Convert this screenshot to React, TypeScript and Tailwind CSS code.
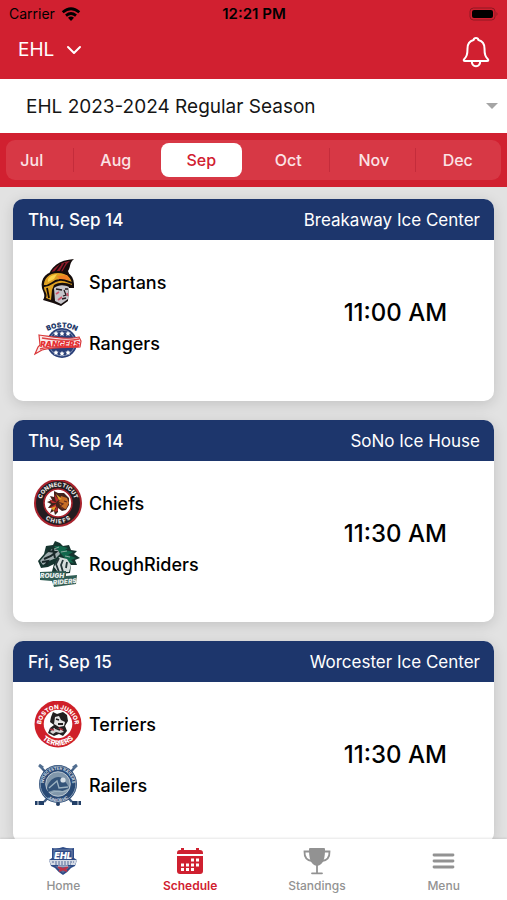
import type { ReactNode } from "react";

function SpartansLogo() {
  return (
    <svg viewBox="0 0 48 48" className="size-12" aria-hidden="true">
      <path d="M14 19C16 8 25 1 40 0C35 4 37 8 34 12L36 17L14 21Z" fill="#160d0c" />
      <path d="M17 14C21 7 28 3 36 2C31 6 31 9 28 13Z" fill="#8f1b2a" />
      <path d="M21 13L27 5M26 13L31 4M30 12L34 6" stroke="#160d0c" strokeWidth="1.5" />
      <path d="M8 29C6 19 13 12 24 12C35 12 41 17 40 29L35 29L34 42L27 47L19 44L9 41C12 36 9 33 8 29Z" fill="#160d0c" />
      <path d="M10 28C9 20 15 14 24 14C33 14 38 19 38 26C31 23 25 23 20 26L18 31L17 41L12 39C14 34 10 33 10 28Z" fill="#dfa122" />
      <path d="M23 17L33 16L36 21L26 21Z" fill="#f08125" />
      <path d="M14 20C16 17 19 16 23 15L20 20L14 23Z" fill="#fbd34b" />
      <path d="M10 27C17 27 18 22 25 21C31 20 34 23 38 24M13 29L15 39" fill="none" stroke="#160d0c" strokeWidth="1.8" />
      <path d="M20 29C25 25 31 26 35 28L34 40L27 45L21 42Z" fill="#c6c5ca" />
      <path d="M22 30L28 31M31 30L34 30M30 31L32 36L29 37M28 40L32 39" fill="none" stroke="#241b20" strokeWidth="1.3" />
      <path d="M25 33L22 35M28 38L24 41M33 34L34 37" stroke="#d0566c" strokeWidth="1.6" />
    </svg>
  );
}

function RangersLogo() {
  return (
    <svg viewBox="0 0 48 48" className="size-12" aria-hidden="true">
      <circle cx="28" cy="23" r="15" fill="#293f78" />
      <circle cx="28" cy="23" r="13" fill="none" stroke="#8c9cbd" strokeWidth=".8" />
      <path id="rangers-top" d="M12 12Q28 3 44 12" fill="none" />
      <text fill="#243969" stroke="#fff" strokeWidth="1" paintOrder="stroke" fontFamily="Inter, sans-serif" fontSize="7" fontWeight="900">
        <textPath href="#rangers-top" startOffset="50%" textAnchor="middle">BOSTON</textPath>
      </text>
      <g fill="#fff">
        <path id="rangers-star" d="M22 11l.8 1.6 1.8.2-1.3 1.3.3 1.8-1.6-.9-1.6.9.3-1.8-1.3-1.3 1.8-.2Z" />
        <use href="#rangers-star" x="6" />
        <use href="#rangers-star" x="12" />
        <use href="#rangers-star" y="19" />
        <use href="#rangers-star" x="6" y="20" />
        <use href="#rangers-star" x="12" y="19" />
      </g>
      <path d="M5 15C20 17 33 20 45 17L47 21L46 27C34 28 21 26 8 30L1 34L4 27L6 25Z" fill="#fbeaea" stroke="#d9393b" strokeWidth="1.2" />
      <path d="M8 18C20 20 34 22 45 19M6 29C16 25 33 27 45 26" stroke="#dd4546" strokeWidth="1.4" fill="none" />
      <text x="26" y="27" textAnchor="middle" fill="#e52f32" fontFamily="Inter, sans-serif" fontSize="8" fontWeight="900" fontStyle="italic">RANGERS</text>
    </svg>
  );
}

function ChiefsLogo() {
  return (
    <svg viewBox="0 0 48 48" className="size-12" aria-hidden="true">
      <circle cx="24" cy="23" r="24" fill="#a8232d" />
      <circle cx="24" cy="23" r="22" fill="#231c20" />
      <circle cx="24" cy="23" r="14" fill="#fff" stroke="#a8232d" strokeWidth="1.6" />
      <path id="chiefs-top" d="M7.6 28A17 17 0 1 1 40.4 28" fill="none" />
      <path id="chiefs-bottom" d="M4 27A20.4 20.4 0 0 0 44 27" fill="none" />
      <g fill="#e9e5e3" fontFamily="Inter, sans-serif" fontSize="5.8" fontWeight="800">
        <text><textPath href="#chiefs-top" startOffset="50%" textAnchor="middle">CONNECTICUT</textPath></text>
        <text><textPath href="#chiefs-bottom" startOffset="50%" textAnchor="middle">C H I E F S</textPath></text>
      </g>
      <path d="M20 11L24 13L30 13L35 18L35 25L32 30L28 31L24 28L24 32L21 35L20 31L16 33L18 28L14 28L17 24L13 22L18 20L16 16L20 17Z" fill="#42231c" />
      <path d="M27 16L33 18L35 23L32 29L27 28L25 22Z" fill="#c66f25" />
      <path d="M20 14L25 20L22 22ZM15 19L23 23L18 23ZM15 28L22 24L22 28ZM20 32L23 26L24 31Z" fill="#b92c2b" />
      <path d="M22 14L28 19L25 20ZM17 28L22 26L20 31Z" fill="#e5a32b" />
      <path d="M24 22L29 24L26 26L30 29M30 21L33 22" fill="none" stroke="#602c1c" strokeWidth="1.2" />
    </svg>
  );
}

function RoughRidersLogo() {
  return (
    <svg viewBox="0 0 48 48" className="size-12" aria-hidden="true">
      <path d="M12 5L19 4L21 0L26 2L29 5L35 4L37 9L43 10L40 13L46 17L41 19L43 24L37 24L36 32L17 34L20 23L14 26L7 27L4 20L10 13Z" fill="#16352f" />
      <path d="M20 5L27 5L34 7L31 9L39 11L34 14L42 17L37 19L40 22L34 21L29 15Z" fill="#12674c" />
      <path d="M12 13L18 8L24 9L26 13L22 17L15 20L9 24L6 20Z" fill="#9eabad" />
      <path d="M14 10L22 11L17 15L10 18M8 21L14 20L12 24M19 8L21 17" fill="none" stroke="#192728" strokeWidth="2" />
      <path d="M25 16L33 18L37 24L35 31L24 31L20 26Z" fill="#d6dddc" />
      <path d="M25 17L22 23L25 31M29 19L27 24L29 31M33 21L32 27" fill="none" stroke="#243638" strokeWidth="1.8" />
      <path d="M20 8L25 6M27 11L33 10M31 15L36 16" stroke="#8aaca0" />
      <path d="M6 31L32 30L32 35L43 34L42 43L20 46L18 40L6 39Z" fill="#315d54" />
      <g fill="#e7ecea" fontFamily="Inter, sans-serif" fontWeight="900" fontSize="6.6" fontStyle="italic">
        <text x="6" y="37">ROUGH</text>
        <text x="19" y="44" transform="rotate(-5 19 44)">RIDERS</text>
      </g>
    </svg>
  );
}

function TerriersLogo() {
  return (
    <svg viewBox="0 0 48 48" className="size-12" aria-hidden="true">
      <circle cx="24" cy="23" r="23.5" fill="#cf2029" />
      <circle cx="24" cy="23" r="14.3" fill="#fff" />
      <path id="terriers-top" d="M7.5 28A16.8 16.8 0 1 1 40.5 28" fill="none" />
      <path id="terriers-bottom" d="M3 28A21.6 21.6 0 0 0 45 28" fill="none" />
      <g fill="#fff" fontFamily="Inter, sans-serif" fontWeight="800">
        <text fontSize="6"><textPath href="#terriers-top" startOffset="50%" textAnchor="middle">BOSTON JUNIOR</textPath></text>
        <text fontSize="7.2"><textPath href="#terriers-bottom" startOffset="50%" textAnchor="middle">TERRIERS</textPath></text>
      </g>
      <path d="M17 16L19 11L23 13L29 11L33 14L34 20L31 25L33 30L29 35L25 33L20 35L14 32L16 27L20 24L16 21Z" fill="#221f20" />
      <path d="M21 16L25 15L27 19L31 21L30 25L25 26L20 23Z" fill="#e5e4e4" />
      <path d="M20 27L27 28L30 31L26 32L22 31L19 33L16 31Z" fill="#d5d4d4" />
      <path d="M22 18L25 19M28 17L31 19M24 23L29 23M21 27L26 29" stroke="#221f20" strokeWidth="1.8" />
      <path d="M16 28L20 29M25 27L29 29" stroke="#a22c3b" strokeWidth="1.4" />
    </svg>
  );
}

function RailersLogo() {
  return (
    <svg viewBox="0 0 48 48" className="size-12" aria-hidden="true">
      <path d="M6 4L38 40M42 4L10 40" fill="none" stroke="#405d83" strokeWidth="2.4" />
      <path d="M5 3L9 6M43 3L39 6" stroke="#526f91" strokeWidth="3" />
      <path d="M1 41H10M38 41H47" stroke="#223f67" strokeWidth="4" />
      <path d="M4 39V43M44 39V43" stroke="#dbe2e8" />
      <circle cx="24" cy="22" r="19" fill="#294a75" />
      <circle cx="24" cy="22" r="17.8" fill="none" stroke="#9dafc2" strokeWidth=".8" />
      <circle cx="24" cy="22" r="12.3" fill="#8197ab" stroke="#d1d9df" strokeWidth=".8" />
      <path id="railers-top" d="M10 25A14.3 14.3 0 1 1 38 25" fill="none" />
      <path id="railers-bottom" d="M7 25A17.2 17.2 0 0 0 41 25" fill="none" />
      <g fill="#d7dfe5" fontFamily="Inter, sans-serif" fontWeight="700" fontSize="4">
        <text><textPath href="#railers-top" startOffset="50%" textAnchor="middle">WORCESTER RAILERS</textPath></text>
        <text><textPath href="#railers-bottom" startOffset="50%" textAnchor="middle">JUNIOR HC</textPath></text>
      </g>
      <path d="M13 26C15 17 23 13 28 16L33 22L35 26L29 29L20 28L14 30Z" fill="#345479" />
      <circle cx="29" cy="18" r="2.6" fill="#d7e0e7" />
      <path d="M15 26L23 19L25 26L34 25M17 31C23 27 29 32 34 28" fill="none" stroke="#9cb2c1" strokeWidth="1.3" />
      <circle cx="24" cy="42" r="2" fill="#243f66" />
    </svg>
  );
}

function EhlLogo() {
  return (
    <svg viewBox="0 0 30 30" className="size-[30px]" aria-hidden="true">
      <path d="M4 1Q10 2 15 0Q20 2 26 1V11L29 13L27 19L23 21Q20 25 15 28Q10 25 7 21L3 19L1 13L4 11Z" fill="#2e4c87" />
      <path d="M6 3H24V11H6Z" fill="none" stroke="#8594b4" strokeWidth=".8" />
      <text x="15" y="12" textAnchor="middle" fill="#fff" fontFamily="Inter, sans-serif" fontSize="9" fontWeight="900" fontStyle="italic">EHL</text>
      <path d="M1 13H29L27 18H3Z" fill="#d4dae5" />
      <path d="M4 15H26M7 17H23" stroke="#536b98" strokeWidth="1" strokeDasharray="2 1" />
      <path d="M7 19H23L15 26Z" fill="#596d99" />
      <path d="M10 20L19 24M20 20L11 24" stroke="#bd3248" strokeWidth="2" />
      <path d="M10 19H20" stroke="#fff" strokeWidth=".8" />
    </svg>
  );
}

function WifiIcon() {
  return (
    <svg viewBox="0 0 20 14" className="h-[14px] w-5" aria-hidden="true">
      <g fill="none" stroke="#000" strokeWidth="2.8">
        <path d="M1.7 5.2Q10-1.8 18.3 5.2" />
        <path d="M5 8.6Q10 4.4 15 8.6" />
      </g>
      <path d="M7 10.8Q10 8.4 13 10.8L10 14Z" />
    </svg>
  );
}

function BellIcon() {
  return (
    <svg viewBox="0 0 28 32" className="h-8 w-7" fill="none" stroke="#fff" strokeWidth="2" strokeLinejoin="round" aria-hidden="true">
      <path d="M14 2C12.5 2 11.8 2.7 11.6 4C7.5 5 5.5 8.5 5.5 12.5C5.5 19 4.5 20.5 2.2 23.2C1.3 24.3 1.7 25 3 25H25C26.3 25 26.7 24.3 25.8 23.2C23.5 20.5 22.5 19 22.5 12.5C22.5 8.5 20.5 5 16.4 4C16.2 2.7 15.5 2 14 2Z" />
      <path d="M9.7 25C9.9 28.5 11.3 30.2 14 30.2C16.7 30.2 18.1 28.5 18.3 25" />
    </svg>
  );
}

function CalendarIcon() {
  return (
    <svg viewBox="0 0 28 28" className="size-7" fill="#cf2030" aria-hidden="true">
      <path d="M5 1H8V3H20V1H23V3H24Q27 3 27 6V7H1V6Q1 3 4 3H5Z" />
      <path d="M1 9H27V24Q27 27 24 27H4Q1 27 1 24Z" />
      <path d="M15 11.5h3v3h-3zM20 11.5h3v3h-3zM5 16.5h3v3H5zM10 16.5h3v3h-3zM15 16.5h3v3h-3zM20 16.5h3v3h-3zM5 21h3v3H5zM10 21h3v3h-3zM15 21h3v3h-3z" fill="#fff" />
    </svg>
  );
}

function TrophyIcon() {
  return (
    <svg viewBox="0 0 28 28" className="size-7" aria-hidden="true">
      <path d="M6 2Q6 1 7 1H21Q22 1 22 2C22 10 21 18 14 19C7 18 6 10 6 2Z" fill="#929292" />
      <path d="M7 4.5H1.5C1.3 10 4 13.5 9 14M21 4.5H26.5C26.7 10 24 13.5 19 14M14 18V26M9 26.3H19" fill="none" stroke="#929292" strokeWidth="1.8" strokeLinecap="round" />
    </svg>
  );
}

function MenuIcon() {
  return (
    <svg viewBox="0 0 28 28" className="size-7" stroke="#929292" strokeWidth="2.8" strokeLinecap="round" aria-hidden="true">
      <path d="M4 8H23M4 14H23M4 20H23" />
    </svg>
  );
}

type Team = { name: string; logo: ReactNode };
type Game = { date: string; venue: string; time: string; teams: Team[] };

const games: Game[] = [
  {
    date: "Thu, Sep 14",
    venue: "Breakaway Ice Center",
    time: "11:00 AM",
    teams: [
      { name: "Spartans", logo: <SpartansLogo /> },
      { name: "Rangers", logo: <RangersLogo /> },
    ],
  },
  {
    date: "Thu, Sep 14",
    venue: "SoNo Ice House",
    time: "11:30 AM",
    teams: [
      { name: "Chiefs", logo: <ChiefsLogo /> },
      { name: "RoughRiders", logo: <RoughRidersLogo /> },
    ],
  },
  {
    date: "Fri, Sep 15",
    venue: "Worcester Ice Center",
    time: "11:30 AM",
    teams: [
      { name: "Terriers", logo: <TerriersLogo /> },
      { name: "Railers", logo: <RailersLogo /> },
    ],
  },
];

const months = ["Jul", "Aug", "Sep", "Oct", "Nov", "Dec"];
const divided = ["Jul", "Oct", "Nov"];

const tabs = [
  { label: "Home", icon: <EhlLogo />, active: false },
  { label: "Schedule", icon: <CalendarIcon />, active: true },
  { label: "Standings", icon: <TrophyIcon />, active: false },
  { label: "Menu", icon: <MenuIcon />, active: false },
];

function GameCard({ game }: { game: Game }) {
  return (
    <article className="shrink-0 overflow-hidden rounded-[10px] bg-white shadow-[0_3px_14px_rgba(0,0,0,0.14)]">
      <header className="flex h-[41px] items-center justify-between bg-[#1d366c] pt-[2px] pr-[14px] pl-[15px] text-[17px] text-white">
        <h2 className="font-medium">{game.date}</h2>
        <p>{game.venue}</p>
      </header>
      <div className="flex items-center pt-3 pb-[27px]">
        <ul className="flex-1 pl-[21px]">
          {game.teams.map((team) => (
            <li key={team.name} className="flex h-[61px] items-center gap-[7px] text-lg font-medium text-black">
              {team.logo}
              {team.name}
            </li>
          ))}
        </ul>
        <time className="w-[41%] text-center text-2xl font-medium text-black">{game.time}</time>
      </div>
    </article>
  );
}

export default function App() {
  return (
    <div className="flex h-screen flex-col overflow-hidden bg-[#e2e2e2] font-[Inter,sans-serif]">
      <header className="bg-[#d12030]">
        <div className="grid h-7 grid-cols-3 items-center pr-2 pl-[9px] text-sm text-black">
          <div className="flex items-center gap-[6px]">
            Carrier
            <WifiIcon />
          </div>
          <div className="text-center text-[15px] font-semibold">12:21 PM</div>
          <svg viewBox="0 0 30 14" className="h-[14px] w-[30px] justify-self-end" aria-hidden="true">
            <rect x="1" y="1" width="25" height="12" rx="3.5" fill="none" stroke="#8f1822" />
            <rect x="3" y="3" width="21" height="8" rx="2" />
            <path d="M27.5 5Q29.5 7 27.5 9Z" fill="#8f1822" />
          </svg>
        </div>
        <div className="flex h-[51px] items-center justify-between pr-[17px] pb-[7px] pl-[18px]">
          <button type="button" className="flex items-center gap-3 text-[19px] text-white">
            EHL
            <svg viewBox="0 0 16 10" className="h-[10px] w-4" fill="none" stroke="#fff" strokeWidth="2" strokeLinecap="round" strokeLinejoin="round" aria-hidden="true">
              <path d="M2 2L8 8L14 2" />
            </svg>
          </button>
          <button type="button" aria-label="Notifications" className="pt-1">
            <BellIcon />
          </button>
        </div>
      </header>

      <div className="flex h-[54px] items-center bg-white pr-[9px]">
        <select aria-label="Season" className="h-full min-w-0 flex-1 appearance-none bg-white pt-[2px] pl-[26px] text-[19px] text-[#151515]">
          <option>EHL 2023-2024 Regular Season</option>
        </select>
        <svg viewBox="0 0 12 6" className="h-[6px] w-3" aria-hidden="true">
          <path d="M0 0H12L6 6Z" fill="#a5a5a5" />
        </svg>
      </div>

      <nav aria-label="Month" className="bg-[#d12030] px-[6px] py-[7px]">
        <div className="overflow-hidden rounded-[9px] bg-[#d73845]">
          <div className="-ml-[18px] grid h-10 grid-cols-6">
            {months.map((month) => (
              <div key={month} className="flex items-center py-[3px] pr-[3px] pl-[2px]">
                <button
                  type="button"
                  aria-pressed={month === "Sep"}
                  className={
                    month === "Sep"
                      ? "h-full flex-1 rounded-lg bg-white text-base font-medium text-[#d12030]"
                      : "h-full flex-1 text-base font-medium text-[#fbe3e5]"
                  }
                >
                  {month}
                </button>
                {divided.includes(month) && <span className="-mr-[3px] -ml-px h-6 w-px bg-[#c42c3b]" />}
              </div>
            ))}
          </div>
        </div>
      </nav>

      <main className="flex min-h-0 flex-1 flex-col gap-[19px] overflow-y-auto px-[13px] pt-[12px] pb-5 [scrollbar-width:none]">
        {games.map((game) => (
          <GameCard key={game.venue} game={game} />
        ))}
      </main>

      <nav aria-label="Main" className="z-10 grid h-[61px] grid-cols-4 bg-white shadow-[0_-1px_2px_rgba(0,0,0,0.10)]">
        {tabs.map((tab) => (
          <a
            key={tab.label}
            href="#"
            aria-current={tab.active ? "page" : undefined}
            className={
              tab.active
                ? "flex flex-col items-center pt-2 text-xs font-semibold text-[#d12030]"
                : "flex flex-col items-center pt-2 text-xs font-medium text-[#929292]"
            }
          >
            <span className="flex h-[31px] items-start">{tab.icon}</span>
            {tab.label}
          </a>
        ))}
      </nav>
    </div>
  );
}
